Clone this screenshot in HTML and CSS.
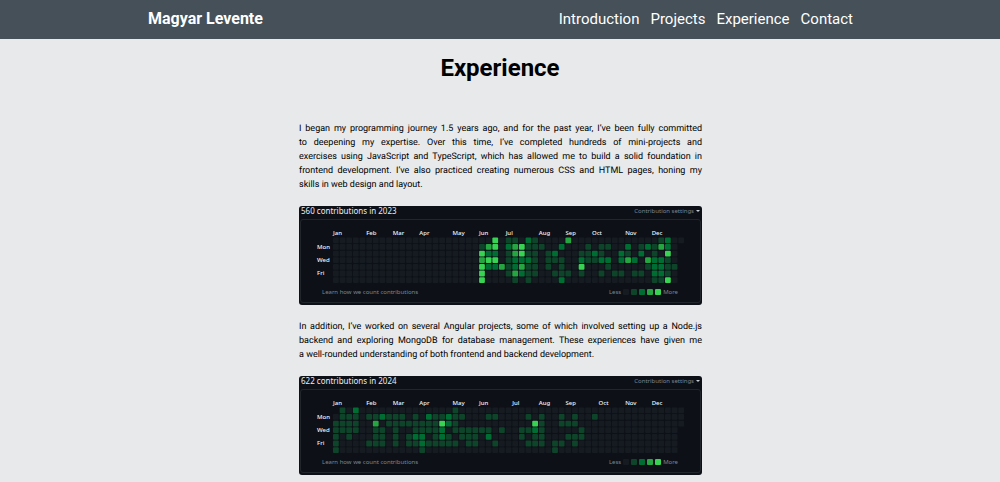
FILE: index.html
```html
<!DOCTYPE html>
<html lang="en">
<head>
  <meta charset="utf-8">
  <meta name="viewport" content="width=device-width, initial-scale=1">
  <title>Magyar Levente – Experience</title>
  <link rel="stylesheet" href="styles.css">
</head>
<body>
  <header class="site-header">
    <div class="site-header-inner">
      <a class="brand" href="#">Magyar Levente</a>
      <nav class="site-nav" aria-label="Main">
        <a href="#introduction">Introduction</a>
        <a href="#projects">Projects</a>
        <a href="#experience">Experience</a>
        <a href="#contact">Contact</a>
      </nav>
    </div>
  </header>

  <main class="experience" id="experience">
    <h1 class="page-title">Experience</h1>
    <div class="column">
      <p class="copy">I began my programming journey 1.5 years ago, and for the past year, I’ve been fully committed<br>
        to deepening my expertise. Over this time, I’ve completed hundreds of mini-projects and<br>
        exercises using JavaScript and TypeScript, which has allowed me to build a solid foundation in<br>
        frontend development. I’ve also practiced creating numerous CSS and HTML pages, honing my
        <span class="last-line">skills in web design and layout.</span></p>

      <figure class="chart">
        <figcaption class="chart-head">
          <span class="chart-title">560 contributions in 2023</span>
          <button class="chart-settings" type="button">Contribution settings<span class="caret"></span></button>
        </figcaption>
        <div class="chart-panel">
          <svg class="chart-grid" data-year="2023" viewBox="0 0 399 65" role="img" aria-label="Contributions by day in 2023"></svg>
          <div class="chart-foot">
            <a class="chart-link" href="#">Learn how we count contributions</a>
            <div class="legend"><span>Less</span><i class="swatch l0"></i><i class="swatch l1"></i><i class="swatch l2"></i><i class="swatch l3"></i><i class="swatch l4"></i><span>More</span></div>
          </div>
        </div>
      </figure>

      <p class="copy">In addition, I’ve worked on several Angular projects, some of which involved setting up a Node.js<br>
        backend and exploring MongoDB for database management. These experiences have given me
        <span class="last-line">a well-rounded understanding of both frontend and backend development.</span></p>

      <figure class="chart">
        <figcaption class="chart-head">
          <span class="chart-title">622 contributions in 2024</span>
          <button class="chart-settings" type="button">Contribution settings<span class="caret"></span></button>
        </figcaption>
        <div class="chart-panel">
          <svg class="chart-grid" data-year="2024" viewBox="0 0 399 65" role="img" aria-label="Contributions by day in 2024"></svg>
          <div class="chart-foot">
            <a class="chart-link" href="#">Learn how we count contributions</a>
            <div class="legend"><span>Less</span><i class="swatch l0"></i><i class="swatch l1"></i><i class="swatch l2"></i><i class="swatch l3"></i><i class="swatch l4"></i><span>More</span></div>
          </div>
        </div>
      </figure>
    </div>
  </main>
  <script src="charts.js"></script>
</body>
</html>
```
FILE: charts.js
```js
// Each entry of "rows" is one weekday, Sunday first: "week:level" pairs.
// "first" and "last" hold the first and last week drawn for each weekday.
const years = {
  2023: {
    months: [0, 5, 9, 13, 18, 22, 26, 31, 35, 39, 44, 48],
    first: [0, 0, 0, 0, 0, 0, 0],
    last: [52, 51, 51, 51, 51, 51, 51],
    rows: [
      "24:4 26:1 27:1 29:2 30:1 35:3 49:1 50:2",
      "22:1 23:3 24:4 26:2 27:3 28:4 29:1 30:1 31:1 34:2 38:1 40:1 41:1 44:2 46:1 47:2 48:1 49:3 50:2",
      "22:4 23:2 24:2 26:1 27:3 28:4 29:1 30:1 32:1 33:2 37:1 38:1 39:2 40:1 43:2 44:1 46:2 48:1 50:4",
      "22:3 23:4 24:4 26:1 27:2 28:2 29:2 30:1 32:1 33:1 34:1 37:2 38:1 39:1 40:2 41:2 43:2 44:3 45:2 47:3 48:2 49:2 50:1",
      "22:4 23:2 24:2 25:3 26:1 27:2 28:3 29:1 30:1 32:1 34:1 37:4 41:1 47:1 48:2 49:2 50:1 51:1",
      "22:4 26:1 27:3 28:2 29:1 30:1 33:1 34:1 35:1 37:1 40:1 42:1 43:1 45:1 46:1 48:2 49:2 50:1",
      "22:4 27:1 29:1 34:2 48:1 49:1 50:4"
    ]
  },
  2024: {
    months: [0, 5, 9, 13, 18, 22, 27, 31, 35, 40, 44, 48],
    first: [1, 0, 0, 0, 0, 0, 0],
    last: [52, 52, 52, 51, 51, 51, 51],
    rows: [
      "1:1 3:2 18:1",
      "1:1 2:1 3:1 5:1 6:1 7:2 8:1 9:1 10:1 12:1 14:2 15:1 16:1 17:2 18:1 19:1 23:1 24:1 29:1 31:1 34:1 36:1 39:1",
      "0:1 1:1 2:1 3:1 6:3 8:1 9:1 10:1 11:1 12:1 13:1 14:1 15:1 16:4 17:2 18:1 30:4 31:1 34:1 35:1 36:1",
      "0:1 1:1 2:1 3:1 6:1 7:1 9:1 12:1 13:1 14:1 15:1 16:2 18:1 19:1 20:1 21:1 22:1 23:1 25:1 28:1 29:1 30:2 31:1 37:1",
      "0:1 2:1 6:1 7:1 9:1 11:1 12:2 13:2 15:1 16:2 17:1 19:1 20:1 21:1 23:2 28:1 30:1 31:1 35:1 36:1 37:1",
      "0:1 5:1 6:1 7:1 9:1 11:1 12:1 13:2 14:1 15:1 16:1 17:1 18:1 20:1 21:1 24:1 29:1 30:1 31:1 33:1 34:1 36:1",
      "0:1 13:1 33:1"
    ]
  }
};

const monthNames = ["Jan", "Feb", "Mar", "Apr", "May", "Jun", "Jul", "Aug", "Sep", "Oct", "Nov", "Dec"];
const left = 32;
const gridTop = 17;
const pitch = 6.64;
const size = 5.8;

function add(svg, name, attrs, text) {
  const el = document.createElementNS("http://www.w3.org/2000/svg", name);
  for (const key in attrs) el.setAttribute(key, attrs[key]);
  if (text) el.textContent = text;
  svg.appendChild(el);
}

document.querySelectorAll(".chart-grid").forEach((svg) => {
  const year = years[svg.dataset.year];
  year.months.forEach((week, i) => {
    add(svg, "text", { class: "chart-label", x: left + week * pitch, y: 15 }, monthNames[i]);
  });
  [["Mon", 1], ["Wed", 3], ["Fri", 5]].forEach(([day, row]) => {
    add(svg, "text", { class: "chart-label", x: 16, y: gridTop + row * pitch + 5 }, day);
  });
  year.rows.forEach((row, r) => {
    const levels = Object.fromEntries(row.split(" ").map((pair) => pair.split(":")));
    for (let week = year.first[r]; week <= year.last[r]; week++) {
      add(svg, "rect", {
        class: "l" + (levels[week] || 0),
        x: left + week * pitch, y: gridTop + 0.4 + r * pitch,
        width: size, height: size, rx: 1
      });
    }
  });
});
```
FILE: styles.css
```css
* {
  box-sizing: border-box;
}

body {
  margin: 0;
  background: #e7e9eb;
  color: #111;
  font-family: Roboto, "Liberation Sans", sans-serif;
  overflow-x: hidden;
}

a {
  color: inherit;
  text-decoration: none;
}

.site-header {
  background: #455059;
  color: #fff;
}

.site-header-inner {
  display: flex;
  justify-content: space-between;
  align-items: center;
  width: 71%;
  margin: 0 auto;
  padding: 9px 2px 10px 3px;
  line-height: 20px;
}

.brand {
  font-size: 16px;
  font-weight: 700;
}

.site-nav {
  display: flex;
  gap: 11px;
  font-size: 15px;
}

.page-title {
  margin: 0;
  padding: 14px 0 39px;
  color: #000;
  font-size: 24px;
  line-height: 30px;
  text-align: center;
}

.column {
  width: 40.4%;
  min-width: 404px;
  margin: 0 auto;
  padding-left: 1px;
}

.copy {
  margin: 0;
  color: #000;
  font-size: 9px;
  line-height: 14px;
  text-align: justify;
  text-align-last: justify;
  text-rendering: geometricPrecision;
}

.last-line {
  display: block;
  text-align-last: left;
}

.chart {
  margin: 14px 0 15px;
  padding: 0 1px 2px;
  overflow: hidden;
  border-radius: 3px;
  background: #0d1117;
  color: #e6edf3;
  font-family: "Noto Sans", "Open Sans", sans-serif;
}

.chart-head {
  display: flex;
  justify-content: space-between;
  align-items: center;
  height: 13px;
  padding: 0 1px 4px;
  line-height: 8px;
}

.chart-title {
  font-size: 8px;
}

.chart-settings {
  display: flex;
  align-items: center;
  gap: 2px;
  padding: 0;
  border: 0;
  background: none;
  color: #7d8590;
  font: 6px/8px "Noto Sans", "Open Sans", sans-serif;
}

.caret {
  border: 2px solid transparent;
  border-top-color: #c9d1d9;
  border-bottom: 0;
}

.chart-panel {
  border: 1px solid #21262d;
  border-radius: 3px;
}

.chart-grid {
  display: block;
  width: 100%;
}

.chart-label {
  fill: #f0f6fc;
  font-size: 6px;
  font-weight: 500;
}

.chart-foot {
  display: flex;
  justify-content: space-between;
  align-items: center;
  padding: 2px 22px 5px 21px;
  color: #7d8590;
  font-size: 6px;
  line-height: 10px;
}

.legend {
  display: flex;
  align-items: center;
  gap: 2px;
}

.swatch {
  width: 6px;
  height: 6px;
  border-radius: 1px;
}

.l0 { fill: #161b22; background: #161b22; }
.l1 { fill: #0e4429; background: #0e4429; }
.l2 { fill: #006d32; background: #006d32; }
.l3 { fill: #26a641; background: #26a641; }
.l4 { fill: #39d353; background: #39d353; }
```
